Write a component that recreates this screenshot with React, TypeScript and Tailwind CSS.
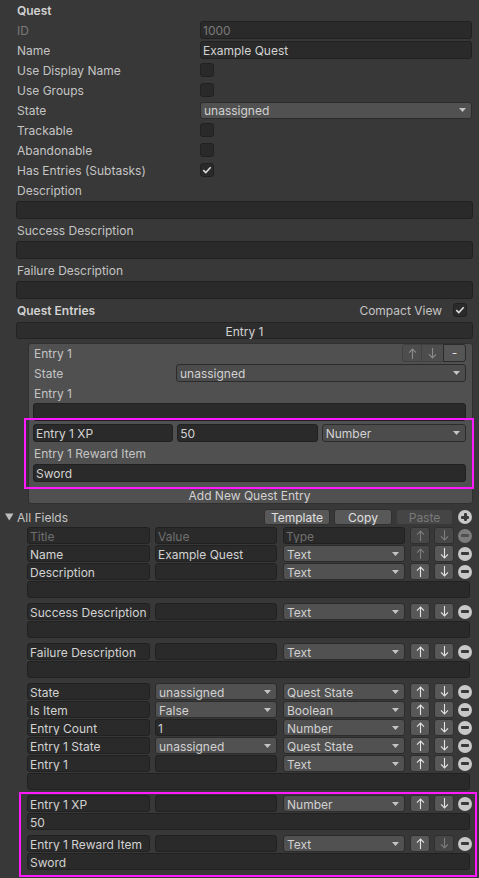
import React from 'react';

type Kind = { kind: 'input'; text?: string; muted?: boolean } | { kind: 'dropdown'; text: string };

// Inter sits a pixel high in these short rows, nudge it down
function T({ children, className = '' }: { children?: React.ReactNode; className?: string }) {
  return <span className={`relative top-px ${className}`}>{children}</span>;
}

function Caret() {
  return (
    <svg width="7" height="4" viewBox="0 0 7 4" className="shrink-0">
      <path d="M0 0h7L3.5 4z" fill="#c4c4c4" />
    </svg>
  );
}

function ArrowIcon({ dir, color }: { dir: 'up' | 'down'; color: string }) {
  const d = dir === 'up' ? 'M4.5 11V1.2M1 4.6 4.5 1.1 8 4.6' : 'M4.5 0v9.8M1 6.4 4.5 9.9 8 6.4';
  return (
    <svg width="9" height="11" viewBox="0 0 9 11">
      <path d={d} fill="none" stroke={color} strokeWidth="1.1" />
    </svg>
  );
}

function Check() {
  return (
    <svg width="10" height="8" viewBox="0 0 10 8">
      <path d="M1.3 4.2 3.8 6.6 8.7 1.3" fill="none" stroke="#dcdcdc" strokeWidth="1.6" />
    </svg>
  );
}

function Input({ text, muted, className = '' }: { text?: string; muted?: boolean; className?: string }) {
  return (
    <div
      className={`flex items-center rounded-[3px] border border-[#212121] bg-[#2a2a2a] px-[2px] whitespace-nowrap overflow-hidden ${
        muted ? 'text-[#6f6f6f]' : 'text-[#d2d2d2]'
      } ${className}`}
    >
      {text && <T>{text}</T>}
    </div>
  );
}

function Dropdown({ text, className = '', bg = 'bg-[#515151]' }: { text: string; className?: string; bg?: string }) {
  return (
    <div
      className={`flex items-center justify-between rounded-[3px] border border-[#2c2c2c] ${bg} pl-[3px] pr-[5px] text-[#d2d2d2] whitespace-nowrap ${className}`}
    >
      <T>{text}</T>
      <Caret />
    </div>
  );
}

function Checkbox({ checked }: { checked?: boolean }) {
  return (
    <div className="flex h-[14px] w-[14px] items-center justify-center rounded-[3px] border border-[#212121] bg-[#2a2a2a]">
      {checked && <Check />}
    </div>
  );
}

function MoveButton({ dir, disabled }: { dir: 'up' | 'down'; disabled?: boolean }) {
  return (
    <div
      className={`flex w-[20px] items-center justify-center rounded-[3px] border border-[#2f2f2f] ${
        disabled ? 'bg-[#474747]' : 'bg-[#585858]'
      }`}
    >
      <ArrowIcon dir={dir} color={disabled ? '#7d7d7d' : '#e4e4e4'} />
    </div>
  );
}

function CircleButton({ plus, disabled }: { plus?: boolean; disabled?: boolean }) {
  return (
    <div
      className={`relative flex h-[14px] w-[14px] shrink-0 items-center justify-center rounded-full ${
        disabled ? 'bg-[#7c7c7c]' : 'bg-[#c8c8c8]'
      }`}
    >
      <div className={`h-[3px] w-[8px] rounded-[1px] ${disabled ? 'bg-[#505050]' : 'bg-[#383838]'}`} />
      {plus && <div className="absolute h-[8px] w-[3px] rounded-[1px] bg-[#383838]" />}
    </div>
  );
}

function PropRow({ label, muted, children }: { label: string; muted?: boolean; children?: React.ReactNode }) {
  return (
    <div className="flex h-5 items-center pl-[17px] pr-[7px]">
      <div className={`w-[183px] shrink-0 ${muted ? 'text-[#7a7a7a]' : ''}`}>
        <T>{label}</T>
      </div>
      <div className="flex flex-1 items-center">{children}</div>
    </div>
  );
}

function TextBlock({ label }: { label: string }) {
  return (
    <div className="flex flex-col">
      <div className="flex h-5 items-center pl-[17px]">
        <T>{label}</T>
      </div>
      <div className="my-px ml-[16px] mr-[6px] h-[18px]">
        <Input className="h-full" />
      </div>
    </div>
  );
}

function FieldRow({
  title,
  value,
  type,
  upDisabled,
  downDisabled,
  header,
}: {
  title: string;
  value: Kind;
  type: string;
  upDisabled?: boolean;
  downDisabled?: boolean;
  header?: boolean;
}) {
  return (
    <div className="ml-[27px] flex h-[17px]">
      <Input text={title} muted={header} className="w-[123px]" />
      <div className="ml-[5px] flex w-[122px]">
        {value.kind === 'input' ? (
          <Input text={value.text} muted={value.muted} className="w-full" />
        ) : (
          <Dropdown text={value.text} className="w-full" />
        )}
      </div>
      <div className="ml-[6px] flex w-[122px]">
        {header ? <Input text={type} muted className="w-full" /> : <Dropdown text={type} className="w-full" />}
      </div>
      <div className="ml-[5px] flex">
        <MoveButton dir="up" disabled={header || upDisabled} />
      </div>
      <div className="ml-[4px] flex">
        <MoveButton dir="down" disabled={header || downDisabled} />
      </div>
      <div className="ml-[4px] flex items-center">
        <CircleButton disabled={header} />
      </div>
    </div>
  );
}

function WideField({ text }: { text?: string }) {
  return <Input text={text} className="ml-[27px] h-[17px] w-[443px]" />;
}

export default function App() {
  return (
    <div className="relative h-[878px] w-[479px] overflow-hidden bg-[#383838] font-['Inter',sans-serif] text-[12px] text-[#c4c4c4]">
      <div className="flex flex-col">
        <div className="flex h-5 items-center pl-[17px] font-semibold text-[#d2d2d2]">
          <T>Quest</T>
        </div>
        <PropRow label="ID" muted>
          <Input text="1000" muted className="h-[18px] w-full text-[#7a7a7a]" />
        </PropRow>
        <PropRow label="Name">
          <Input text="Example Quest" className="h-[18px] w-full" />
        </PropRow>
        <PropRow label="Use Display Name">
          <Checkbox />
        </PropRow>
        <PropRow label="Use Groups">
          <Checkbox />
        </PropRow>
        <PropRow label="State">
          <Dropdown text="unassigned" className="h-[17px] w-full" />
        </PropRow>
        <PropRow label="Trackable">
          <Checkbox />
        </PropRow>
        <PropRow label="Abandonable">
          <Checkbox />
        </PropRow>
        <PropRow label="Has Entries (Subtasks)">
          <Checkbox checked />
        </PropRow>

        <TextBlock label="Description" />
        <TextBlock label="Success Description" />
        <TextBlock label="Failure Description" />

        <div className="flex h-5 items-center pl-[17px] pr-[12px]">
          <div className="flex-1 font-semibold text-[#d2d2d2]">
            <T>Quest Entries</T>
          </div>
          <T className="mr-[11px]">Compact View</T>
          <Checkbox checked />
        </div>

        <div className="ml-[16px] mr-[6px] mt-[2px] flex h-[17px] items-center justify-center rounded-[3px] border border-[#232323] bg-[#2d2d2d] text-[#d2d2d2]">
          <T>Entry 1</T>
        </div>

        {/* entry card */}
        <div className="ml-[28px] mr-[6px] mt-[4px] flex flex-col rounded-[3px] border border-[#303030] bg-[#505050] pl-[4px] pr-[6px]">
          <div className="flex h-[18px] items-center">
            <T className="flex-1 pl-[1px]">Entry 1</T>
            <div className="flex h-[18px]">
              <div className="flex w-[20px] items-center justify-center rounded-l-[3px] border border-[#404040] bg-[#4d4d4d]">
                <ArrowIcon dir="up" color="#8c8c8c" />
              </div>
              <div className="flex w-[21px] items-center justify-center border-y border-[#404040] bg-[#4d4d4d]">
                <ArrowIcon dir="down" color="#8c8c8c" />
              </div>
              <div className="flex w-[23px] items-center justify-center rounded-r-[3px] border border-[#2a2a2a] bg-[#555555] text-[#e0e0e0]">
                -
              </div>
            </div>
          </div>
          <div className="mt-[2px] flex h-[18px]">
            <span className="flex w-[143px] items-center pl-[1px]">
              <T>State</T>
            </span>
            <Dropdown text="unassigned" bg="bg-[#4c4c4c]" className="flex-1" />
          </div>
          <div className="flex h-[21px] items-center pl-[1px] pt-[1px]">
            <T>Entry 1</T>
          </div>
          <Input className="h-[18px]" />
          <div className="mt-[3px] flex h-[18px] gap-[4px]">
            <Input text="Entry 1 XP" className="flex-1" />
            <Input text="50" className="flex-1" />
            <Dropdown text="Number" bg="bg-[#4c4c4c]" className="flex-1" />
          </div>
          <div className="flex h-[22px] items-center pl-[1px]">
            <T>Entry 1 Reward Item</T>
          </div>
          <Input text="Sword" className="h-[18px]" />
          <div className="mt-[4px] flex h-[17px] items-center justify-center text-[#d2d2d2]">
            <T>Add New Quest Entry</T>
          </div>
        </div>

        {/* all fields */}
        <div className="mt-[4px] flex h-[18px] items-center pr-[7px]">
          <svg width="9" height="8" viewBox="0 0 9 8" className="ml-[5px]">
            <path d="M0 0.5h8.5L4.25 7.5z" fill="#bdbdbd" />
          </svg>
          <T className="ml-[3px] flex-1">All Fields</T>
          <div className="flex h-[16px] w-[66px] items-center justify-center rounded-[3px] border border-[#303030] bg-[#585858] text-[#e0e0e0]">
            <T>Template</T>
          </div>
          <div className="ml-[4px] flex h-[16px] w-[58px] items-center justify-center rounded-[3px] border border-[#303030] bg-[#585858] text-[#e0e0e0]">
            <T>Copy</T>
          </div>
          <div className="ml-[4px] flex h-[16px] w-[57px] items-center justify-center rounded-[3px] border border-[#383838] bg-[#454545] text-[#7a7a7a]">
            <T>Paste</T>
          </div>
          <div className="ml-[5px]">
            <CircleButton plus />
          </div>
        </div>

        <div className="mt-px flex flex-col gap-[5px]">
          <div className="flex flex-col gap-px">
            <FieldRow header title="Title" value={{ kind: 'input', text: 'Value', muted: true }} type="Type" />
            <FieldRow title="Name" value={{ kind: 'input', text: 'Example Quest' }} type="Text" upDisabled />
            <FieldRow title="Description" value={{ kind: 'input' }} type="Text" />
            <WideField />
          </div>
          <div className="flex flex-col gap-px">
            <FieldRow title="Success Description" value={{ kind: 'input' }} type="Text" />
            <WideField />
          </div>
          <div className="flex flex-col gap-px">
            <FieldRow title="Failure Description" value={{ kind: 'input' }} type="Text" />
            <WideField />
          </div>
          <div className="flex flex-col gap-px">
            <FieldRow title="State" value={{ kind: 'dropdown', text: 'unassigned' }} type="Quest State" />
            <FieldRow title="Is Item" value={{ kind: 'dropdown', text: 'False' }} type="Boolean" />
            <FieldRow title="Entry Count" value={{ kind: 'input', text: '1' }} type="Number" />
            <FieldRow title="Entry 1 State" value={{ kind: 'dropdown', text: 'unassigned' }} type="Quest State" />
            <FieldRow title="Entry 1" value={{ kind: 'input' }} type="Text" />
            <WideField />
          </div>
          <div className="flex flex-col gap-px">
            <FieldRow title="Entry 1 XP" value={{ kind: 'input' }} type="Number" />
            <WideField text="50" />
          </div>
          <div className="flex flex-col gap-px">
            <FieldRow title="Entry 1 Reward Item" value={{ kind: 'input' }} type="Text" downDisabled />
            <WideField text="Sword" />
          </div>
        </div>
      </div>

      {/* highlight annotations */}
      <div className="pointer-events-none absolute left-[24px] top-[418px] h-[71px] w-[450px] border-2 border-[#ff1aff]" />
      <div className="pointer-events-none absolute left-[19px] top-[792px] h-[85px] w-[458px] border-2 border-[#ff1aff]" />
    </div>
  );
}
